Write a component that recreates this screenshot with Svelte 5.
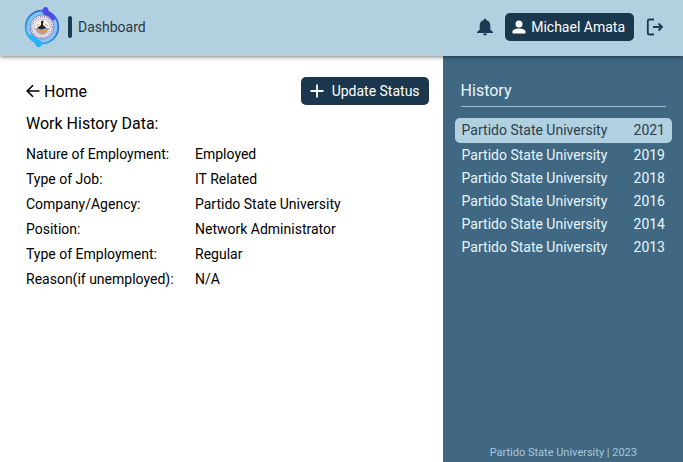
<script>
  const details = [
    ['Nature of Employment:', 'Employed'],
    ['Type of Job:', 'IT Related'],
    ['Company/Agency:', 'Partido State University'],
    ['Position:', 'Network Administrator'],
    ['Type of Employment:', 'Regular'],
    ['Reason(if unemployed):', 'N/A'],
  ];
  const years = [2021, 2019, 2018, 2016, 2014, 2013];
  let selected = $state(2021);
</script>

<div class="page">
  <header>
    <svg class="logo" viewBox="0 0 36 42" aria-hidden="true">
      <defs>
        <linearGradient id="ring" x1="0.8" y1="0" x2="0.2" y2="1">
          <stop offset="0" stop-color="#3a55e0" />
          <stop offset="0.45" stop-color="#2f7fd0" />
          <stop offset="1" stop-color="#29b4f4" />
        </linearGradient>
      </defs>
      <circle cx="18" cy="21" r="16.3" fill="#8ec4f2" stroke="url(#ring)" stroke-width="1.8" />
      <path d="M4 20A14 14 0 0 1 20 7" fill="none" stroke="#6fc6f5" stroke-width="1.5" />
      <path d="M18.500 4.500Q19 .6 22 1Q24.500 1.500 24.500 4.500Q25 7 28 8.500Q31.500 10.500 30.500 14Q29 15.500 27 13Q25 10 21 9Q18 8 18.500 4.500Z" fill="#5048e6" />
      <path d="M5 29Q8 27 10.500 30Q13 33 16 34.500Q19 36 17.500 39.500Q15 42.500 12 40Q11 39 11 37Q5.500 34 5 29Z" fill="#25b5f7" />
      <circle cx="18" cy="21" r="12" fill="#eceaf4" stroke="#6678a8" stroke-width="0.8" />
      <circle cx="18" cy="21" r="10.300" fill="none" stroke="#8d82a0" stroke-width="1.500" stroke-dasharray="1 1.100" />
      <circle cx="18" cy="21" r="8" fill="#fbf1e9" stroke="#b3a6b2" stroke-width="0.700" />
      <path d="M11 22H25Q24 27.500 18 28.500Q12 27.500 11 22Z" fill="#a3a5b2" />
      <path d="M17 15L19.500 14.500L19 19L22.500 22L17 23.500L13 22L17 19Z" fill="#28262e" />
      <path d="M12 20L15 18M21 18L24 20M13 24.500H23M15 26.500H21" stroke="#d49a62" stroke-width="1" />
    </svg>
    <span class="bar"></span>
    <span class="title">Dashboard</span>
    <div class="actions">
      <button class="icon" aria-label="Notifications">
        <svg width="18" height="18" viewBox="0 0 18 18" fill="#1c3a53">
          <path d="M9 .5Q10.200 .5 10.200 1.900C13 2.500 14.300 4.700 14.300 7.500V11.500L17 14V15H1V14L3.700 11.500V7.500C3.700 4.700 5 2.500 7.800 1.900Q7.800 .5 9 .5ZM7 15.500H11Q11 17.500 9 17.500Q7 17.500 7 15.500Z" />
        </svg>
      </button>
      <button class="dark user">
        <svg width="14" height="14" viewBox="0 0 14 14" fill="#fff" aria-hidden="true">
          <circle cx="7" cy="4" r="3.500" />
          <path d="M.5 13.500V11.500C.5 9.500 4 8.500 7 8.500S13.500 9.500 13.500 11.500V13.500Z" />
        </svg>
        Michael Amata
      </button>
      <button class="icon" aria-label="Log out">
        <svg width="18" height="18" viewBox="0 0 18 18" fill="none" stroke="#1c3a53" stroke-width="1.800">
          <path d="M9 1.500H4.500Q2.800 1.500 2.800 3.200V14.800Q2.800 16.500 4.500 16.500H9M8 9H16.500M13.500 5.500L17 9L13.500 12.500" />
        </svg>
      </button>
    </div>
  </header>

  <div class="body">
    <main>
      <div class="top">
        <a class="home" href="#home">
          <svg width="14" height="14" viewBox="0 0 14 14" fill="none" stroke="#000" stroke-width="1.600" aria-hidden="true">
            <path d="M13.500 7H1.500M7 1.200L1.200 7L7 12.800" />
          </svg>
          Home
        </a>
        <button class="dark update">
          <svg width="14" height="14" viewBox="0 0 14 14" stroke="#fff" stroke-width="1.800" aria-hidden="true">
            <path d="M7 .5V13.500M.5 7H13.500" />
          </svg>
          Update Status
        </button>
      </div>
      <h1>Work History Data:</h1>
      <dl>
        {#each details as [label, value]}
          <dt>{label}</dt>
          <dd>{value}</dd>
        {/each}
      </dl>
    </main>

    <aside>
      <h2>History</h2>
      <div class="list">
        {#each years as year}
          <button class="entry" class:selected={selected === year} onclick={() => (selected = year)}>
            <span>Partido State University</span>
            <span>{year}</span>
          </button>
        {/each}
      </div>
      <footer>Partido State University | 2023</footer>
    </aside>
  </div>
</div>

<style>
  .page {
    display: flex;
    flex-direction: column;
    min-height: 100vh;
    font-family: Roboto, sans-serif;
    font-size: 14px;
    color: #000;
    background: #fff;
  }
  button {
    font: inherit;
    border: 0;
    cursor: pointer;
  }
  svg {
    display: block;
    flex: none;
  }
  header {
    display: flex;
    align-items: center;
    height: 56px;
    box-sizing: border-box;
    padding: 0 20px 2px 24px;
    background: #b1d0e0;
    box-shadow: 0 1px 4px rgba(0, 0, 0, 0.5);
    position: relative;
  }
  .logo {
    width: 36px;
    height: 42px;
  }
  .bar {
    width: 4px;
    height: 22px;
    margin: 0 6px 0 8px;
    border-radius: 2px;
    background: #1c3a53;
  }
  .title {
    color: #2b3940;
  }
  .actions {
    display: flex;
    align-items: center;
    gap: 11px;
    margin-left: auto;
  }
  .icon {
    padding: 0;
    background: none;
  }
  .dark {
    display: flex;
    align-items: center;
    height: 28px;
    border-radius: 5px;
    color: #fff;
    background: #1a374d;
  }
  .user {
    gap: 5px;
    padding: 0 9px 0 7px;
  }
  .body {
    display: flex;
    flex: 1;
  }
  main {
    flex: 1;
    padding: 21px 14px 20px 26px;
  }
  .top {
    display: flex;
    align-items: center;
    justify-content: space-between;
  }
  .home {
    display: flex;
    align-items: center;
    gap: 4px;
    font-size: 16px;
    color: inherit;
    text-decoration: none;
  }
  .update {
    gap: 8px;
    padding: 0 9px;
  }
  h1,
  h2 {
    margin: 0;
    font-size: 16px;
    line-height: 20px;
    font-weight: 400;
  }
  h1 {
    margin-top: 9px;
  }
  dl {
    display: grid;
    grid-template-columns: 169px 1fr;
    margin: 8px 0 0;
    line-height: 25px;
  }
  dd {
    margin: 0;
  }
  aside {
    display: flex;
    flex-direction: column;
    width: 35.200%;
    box-sizing: border-box;
    padding: 25px 11px 2px 12px;
    color: #e9f5fb;
    background: #406882;
  }
  h2 {
    margin: 0 6px;
    padding-bottom: 5px;
    border-bottom: 1px solid #9fc0d2;
  }
  .list {
    display: flex;
    flex-direction: column;
    margin-top: 11px;
  }
  .entry {
    display: flex;
    align-items: center;
    justify-content: space-between;
    padding: 0 7px;
    line-height: 23px;
    border-radius: 5px;
    color: inherit;
    background: none;
  }
  .selected {
    margin-bottom: 1px;
    line-height: 25px;
    color: #2b3f4c;
    background: #b1d0e0;
  }
  footer {
    margin-top: auto;
    padding-top: 20px;
    font-size: 11px;
    line-height: 14px;
    text-align: center;
    color: #a6c6d8;
  }
</style>
